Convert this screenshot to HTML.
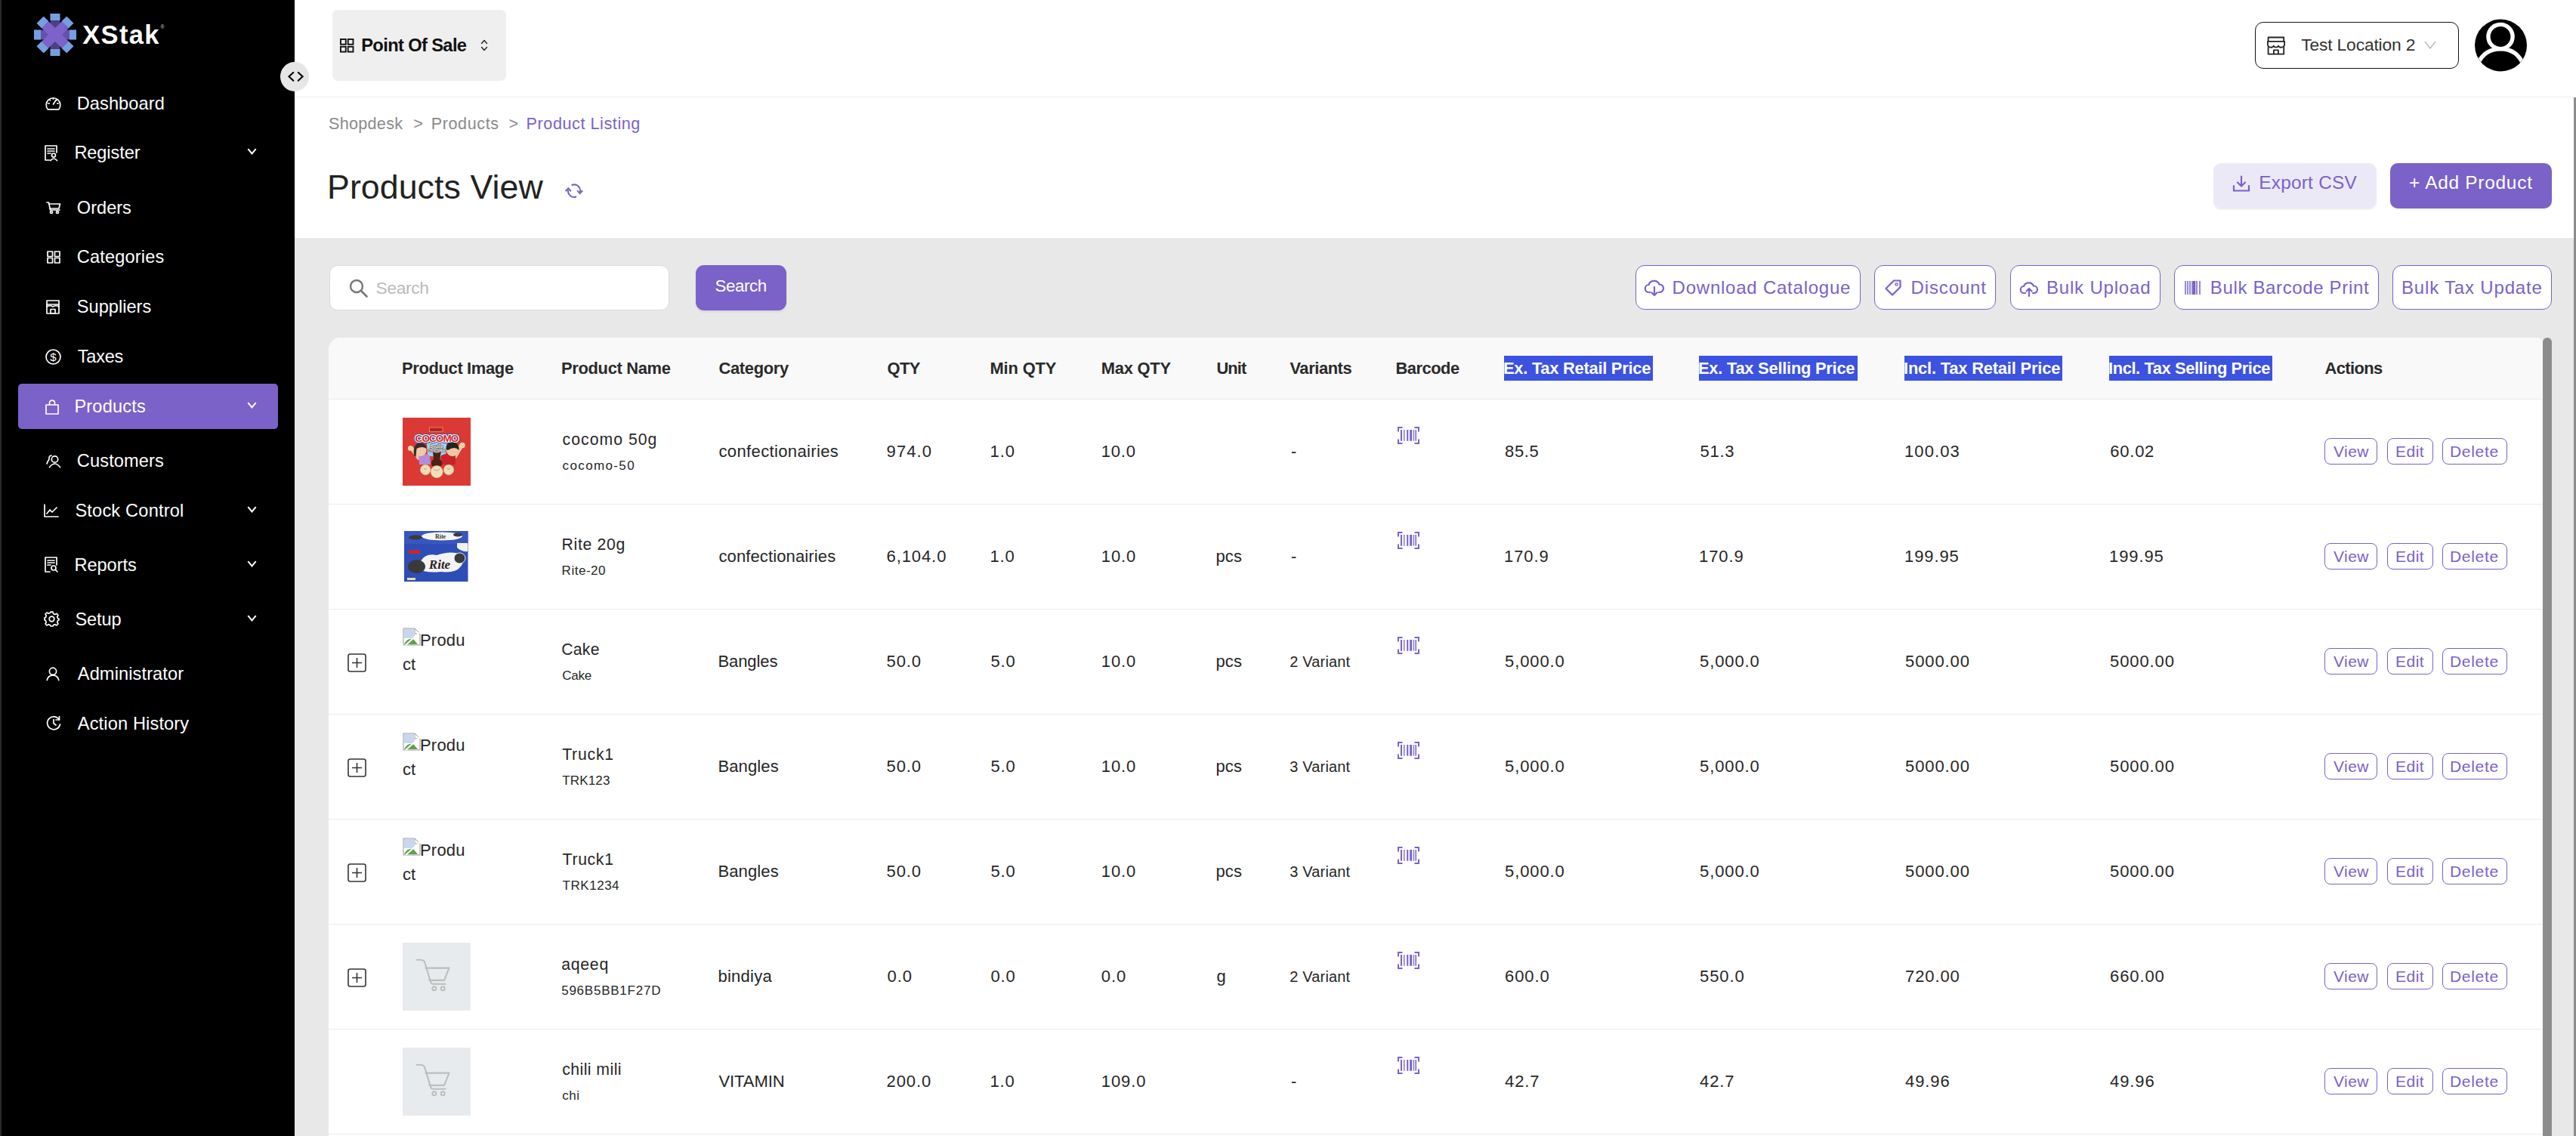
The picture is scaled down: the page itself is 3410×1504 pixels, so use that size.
<!DOCTYPE html>
<html><head><meta charset="utf-8"><title>Products View</title>
<style>
html,body{margin:0;padding:0;}
body{width:3410px;height:1504px;overflow:hidden;position:relative;background:#fff;font-family:"Liberation Sans",sans-serif;}
.a{position:absolute;box-sizing:border-box;}
.t{position:absolute;line-height:1;white-space:nowrap;}
svg.a{overflow:visible;}
</style></head><body>

<div class="a" style="left:390.0px;top:0.0px;width:3020.0px;height:128.0px;background:#fff;"></div>
<div class="a" style="left:390.0px;top:128.0px;width:3020.0px;height:1.0px;background:#EDEDED;"></div>
<div class="a" style="left:390.0px;top:315.0px;width:3020.0px;height:1189.0px;background:#E8E8E8;"></div>
<div class="a" style="left:3407.0px;top:129.0px;width:3.0px;height:1375.0px;background:#8C8C8C;"></div>
<div class="a" style="left:0.0px;top:0.0px;width:390.0px;height:1504.0px;background:#000;"></div>
<div class="a" style="left:0.0px;top:0.0px;width:1.5px;height:1504.0px;background:#2a2a2a;"></div>
<svg class="a" style="left:44.8px;top:18.0px;" width="56" height="56" viewBox="0 0 56 56">
<g transform="translate(28,28)">
 <g><rect x="-6.4" y="-28" width="12.8" height="56" fill="#4E3E82"/><rect x="-6.4" y="-28" width="12.8" height="9" fill="#74A0E0"/><rect x="-6.4" y="19" width="12.8" height="9" fill="#74A0E0"/></g>
 <g transform="rotate(90)"><rect x="-6.4" y="-28" width="12.8" height="56" fill="#6551A8"/><rect x="-6.4" y="-28" width="12.8" height="9" fill="#74A0E0"/><rect x="-6.4" y="19" width="12.8" height="9" fill="#74A0E0"/></g>
 <g transform="rotate(45)"><rect x="-6.4" y="-28" width="12.8" height="56" fill="#7B63C9"/><rect x="-6.4" y="-28" width="12.8" height="9" fill="#74A0E0"/><rect x="-6.4" y="19" width="12.8" height="9" fill="#74A0E0"/></g>
 <g transform="rotate(-45)"><rect x="-6.4" y="-28" width="12.8" height="56" fill="#7B63C9"/><rect x="-6.4" y="-28" width="12.8" height="9" fill="#74A0E0"/><rect x="-6.4" y="19" width="12.8" height="9" fill="#74A0E0"/></g>
</g></svg>
<div class="t" style="left:109.2px;top:28.6px;font-size:34.5px;color:#fff;font-weight:700;letter-spacing:1.350px;">XStak</div>
<div class="t" style="left:212.6px;top:32.1px;font-size:7px;color:#ccc;font-weight:400;letter-spacing:0.000px;">&reg;</div>
<div class="a" style="left:24.0px;top:508.0px;width:344.0px;height:60.0px;background:#7A62C8;border-radius:5px;"></div>
<div class="t" style="left:101.7px;top:125.6px;font-size:23.6px;color:#fff;font-weight:400;letter-spacing:0.088px;">Dashboard</div>
<svg class="a" style="left:60.0px;top:127.0px;" width="21" height="19" viewBox="0 0 21 19"><path d="M3.2 17.8 A9.3 9.3 0 1 1 17.8 17.8 Z" fill="none" stroke="#fff" stroke-width="1.7" stroke-linecap="round" stroke-linejoin="round"/><path d="M10.5 11 L14 5.5" fill="none" stroke="#fff" stroke-width="1.7" stroke-linecap="round" stroke-linejoin="round" stroke-width="2"/><path d="M10.5 3 v1.2 M4 9.8 h1.2 M17 9.8 h-1.2 M5.6 5 l0.8 0.8 M15.4 5 l-0.8 0.8" fill="none" stroke="#fff" stroke-width="1.7" stroke-linecap="round" stroke-linejoin="round"/></svg>
<div class="t" style="left:98.4px;top:191.0px;font-size:23.6px;color:#fff;font-weight:400;letter-spacing:-0.100px;">Register</div>
<svg class="a" style="left:58.8px;top:192.2px;" width="18" height="21" viewBox="0 0 18 21"><path d="M7 20 H1 V1 H16 V10" fill="none" stroke="#fff" stroke-width="1.7" stroke-linecap="round" stroke-linejoin="round"/><path d="M4 5 H13 M4 8 H13 M4 11 H8" fill="none" stroke="#fff" stroke-width="1.7" stroke-linecap="round" stroke-linejoin="round"/><circle cx="12" cy="13.5" r="2.5" fill="none" stroke="#fff" stroke-width="1.7" stroke-linecap="round" stroke-linejoin="round"/><path d="M8 20.5 Q12 15.5 16.5 20.5" fill="none" stroke="#fff" stroke-width="1.7" stroke-linecap="round" stroke-linejoin="round"/></svg>
<svg class="a" style="left:326.0px;top:195.0px;" width="14" height="10" viewBox="0 0 14 10"><path d="M2.3 2.2 L7.5 8.5 L12.7 2.2" fill="none" stroke="#fff" stroke-width="2" stroke-linecap="butt" stroke-linejoin="miter"/></svg>
<div class="t" style="left:101.8px;top:263.8px;font-size:23.6px;color:#fff;font-weight:400;letter-spacing:0.000px;">Orders</div>
<svg class="a" style="left:61.0px;top:267.0px;" width="20" height="16" viewBox="0 0 20 16"><path d="M1 1 H3.5 L5.5 11 H18" fill="none" stroke="#fff" stroke-width="1.7" stroke-linecap="round" stroke-linejoin="round"/><path d="M4 3 H18.5 L17 9 H5.2" fill="none" stroke="#fff" stroke-width="1.7" stroke-linecap="round" stroke-linejoin="round"/><circle cx="7" cy="14" r="1.5" fill="none" stroke="#fff" stroke-width="1.7" stroke-linecap="round" stroke-linejoin="round"/><circle cx="15" cy="14" r="1.5" fill="none" stroke="#fff" stroke-width="1.7" stroke-linecap="round" stroke-linejoin="round"/></svg>
<div class="t" style="left:101.8px;top:329.0px;font-size:23.6px;color:#fff;font-weight:400;letter-spacing:0.144px;">Categories</div>
<svg class="a" style="left:61.8px;top:332.0px;" width="18" height="17" viewBox="0 0 18 17"><rect x="1" y="1" width="6.5" height="6.5" fill="none" stroke="#fff" stroke-width="1.7" stroke-linecap="round" stroke-linejoin="round"/><rect x="10.5" y="1" width="6.5" height="6.5" fill="none" stroke="#fff" stroke-width="1.7" stroke-linecap="round" stroke-linejoin="round"/><rect x="1" y="9.5" width="6.5" height="6.5" fill="none" stroke="#fff" stroke-width="1.7" stroke-linecap="round" stroke-linejoin="round"/><rect x="10.5" y="9.5" width="6.5" height="6.5" fill="none" stroke="#fff" stroke-width="1.7" stroke-linecap="round" stroke-linejoin="round"/></svg>
<div class="t" style="left:101.8px;top:395.0px;font-size:23.6px;color:#fff;font-weight:400;letter-spacing:0.012px;">Suppliers</div>
<svg class="a" style="left:61.4px;top:397.0px;" width="18" height="19" viewBox="0 0 18 19"><rect x="1" y="1" width="16" height="17" fill="none" stroke="#fff" stroke-width="1.7" stroke-linecap="round" stroke-linejoin="round"/><path d="M1 6 H17" fill="none" stroke="#fff" stroke-width="1.7" stroke-linecap="round" stroke-linejoin="round"/><path d="M1 9 Q5 6.5 9 9 Q13 6.5 17 9" fill="none" stroke="#fff" stroke-width="1.7" stroke-linecap="round" stroke-linejoin="round"/><rect x="6" y="12.5" width="6" height="5.5" fill="none" stroke="#fff" stroke-width="1.7" stroke-linecap="round" stroke-linejoin="round"/></svg>
<div class="t" style="left:102.8px;top:461.0px;font-size:23.6px;color:#fff;font-weight:400;letter-spacing:-0.275px;">Taxes</div>
<svg class="a" style="left:60.3px;top:461.6px;" width="21" height="21" viewBox="0 0 21 21"><circle cx="10.5" cy="10.5" r="9.5" fill="none" stroke="#fff" stroke-width="1.7" stroke-linecap="round" stroke-linejoin="round"/><text x="10.5" y="15.8" font-size="15" text-anchor="middle" fill="#fff" font-family="Liberation Sans">$</text></svg>
<div class="t" style="left:98.4px;top:527.0px;font-size:23.6px;color:#fff;font-weight:400;letter-spacing:0.186px;">Products</div>
<svg class="a" style="left:58.5px;top:529.0px;" width="20" height="20" viewBox="0 0 20 20"><path d="M2 7 H18 V19 H2 Z" fill="none" stroke="#fff" stroke-width="1.7" stroke-linecap="round" stroke-linejoin="round"/><path d="M6.5 7 V4.5 Q6.5 1.2 10 1.2 Q13.5 1.2 13.5 4.5 V7" fill="none" stroke="#fff" stroke-width="1.7" stroke-linecap="round" stroke-linejoin="round"/></svg>
<svg class="a" style="left:326.0px;top:531.0px;" width="14" height="10" viewBox="0 0 14 10"><path d="M2.3 2.2 L7.5 8.5 L12.7 2.2" fill="none" stroke="#fff" stroke-width="2" stroke-linecap="butt" stroke-linejoin="miter"/></svg>
<div class="t" style="left:101.8px;top:599.0px;font-size:23.6px;color:#fff;font-weight:400;letter-spacing:0.125px;">Customers</div>
<svg class="a" style="left:60.5px;top:600.0px;" width="20" height="19" viewBox="0 0 20 19"><circle cx="11.5" cy="8" r="4.2" fill="none" stroke="#fff" stroke-width="1.7" stroke-linecap="round" stroke-linejoin="round"/><path d="M4.5 18.5 Q11.5 9.5 18.5 18.5" fill="none" stroke="#fff" stroke-width="1.7" stroke-linecap="round" stroke-linejoin="round"/><path d="M7 3 Q3.5 3.5 4 8 Q2 11 1 14" fill="none" stroke="#fff" stroke-width="1.7" stroke-linecap="round" stroke-linejoin="round"/></svg>
<div class="t" style="left:99.4px;top:664.5px;font-size:23.6px;color:#fff;font-weight:400;letter-spacing:0.192px;">Stock Control</div>
<svg class="a" style="left:58.0px;top:667.0px;" width="20" height="18" viewBox="0 0 20 18"><path d="M1 1 V17 H19" fill="none" stroke="#fff" stroke-width="1.7" stroke-linecap="round" stroke-linejoin="round"/><path d="M4 13 L8 8 L11 11 L17 5" fill="none" stroke="#fff" stroke-width="1.7" stroke-linecap="round" stroke-linejoin="round"/></svg>
<svg class="a" style="left:326.0px;top:668.5px;" width="14" height="10" viewBox="0 0 14 10"><path d="M2.3 2.2 L7.5 8.5 L12.7 2.2" fill="none" stroke="#fff" stroke-width="2" stroke-linecap="butt" stroke-linejoin="miter"/></svg>
<div class="t" style="left:98.4px;top:737.0px;font-size:23.6px;color:#fff;font-weight:400;letter-spacing:-0.033px;">Reports</div>
<svg class="a" style="left:58.5px;top:737.0px;" width="18" height="21" viewBox="0 0 18 21"><path d="M7 20 H1 V1 H16 V11" fill="none" stroke="#fff" stroke-width="1.7" stroke-linecap="round" stroke-linejoin="round"/><path d="M4 5 H13 M4 8 H13 M4 11 H8" fill="none" stroke="#fff" stroke-width="1.7" stroke-linecap="round" stroke-linejoin="round"/><circle cx="12" cy="15" r="3" fill="none" stroke="#fff" stroke-width="1.7" stroke-linecap="round" stroke-linejoin="round"/><path d="M14.5 17.5 L17 20" fill="none" stroke="#fff" stroke-width="1.7" stroke-linecap="round" stroke-linejoin="round"/></svg>
<svg class="a" style="left:326.0px;top:741.0px;" width="14" height="10" viewBox="0 0 14 10"><path d="M2.3 2.2 L7.5 8.5 L12.7 2.2" fill="none" stroke="#fff" stroke-width="2" stroke-linecap="butt" stroke-linejoin="miter"/></svg>
<div class="t" style="left:99.4px;top:809.0px;font-size:23.6px;color:#fff;font-weight:400;letter-spacing:-0.125px;">Setup</div>
<svg class="a" style="left:58.0px;top:809.0px;" width="21" height="21" viewBox="0 0 21 21"><circle cx="10.5" cy="10.5" r="3.3" fill="none" stroke="#fff" stroke-width="1.7" stroke-linecap="round" stroke-linejoin="round"/><path d="M9 1.2 H12 L12.6 3.6 L14.8 4.6 L17 3.4 L19 5.5 L17.7 7.7 L18.6 9.8 L20 10.5 V12 L18.6 12.6 L17.7 14.8 L19 17 L17 19 L14.8 17.7 L12.6 18.6 L12 20 H9 L8.4 18.6 L6.2 17.7 L4 19 L2 17 L3.3 14.8 L2.4 12.6 L1 12 V9 L2.4 8.4 L3.3 6.2 L2 4 L4 2 L6.2 3.3 L8.4 2.4 Z" fill="none" stroke="#fff" stroke-width="1.7" stroke-linecap="round" stroke-linejoin="round"/></svg>
<svg class="a" style="left:326.0px;top:813.0px;" width="14" height="10" viewBox="0 0 14 10"><path d="M2.3 2.2 L7.5 8.5 L12.7 2.2" fill="none" stroke="#fff" stroke-width="2" stroke-linecap="butt" stroke-linejoin="miter"/></svg>
<div class="t" style="left:102.8px;top:881.0px;font-size:23.6px;color:#fff;font-weight:400;letter-spacing:0.108px;">Administrator</div>
<svg class="a" style="left:61.0px;top:883.0px;" width="18" height="18" viewBox="0 0 18 18"><circle cx="9" cy="5.8" r="4.6" fill="none" stroke="#fff" stroke-width="1.7" stroke-linecap="round" stroke-linejoin="round"/><path d="M1.2 17.5 Q2.5 11.2 9 11.2 Q15.5 11.2 16.8 17.5" fill="none" stroke="#fff" stroke-width="1.7" stroke-linecap="round" stroke-linejoin="round"/></svg>
<div class="t" style="left:102.8px;top:947.0px;font-size:23.6px;color:#fff;font-weight:400;letter-spacing:0.138px;">Action History</div>
<svg class="a" style="left:60.5px;top:947.0px;" width="20" height="20" viewBox="0 0 20 20"><path d="M17.5 6 A8.5 8.5 0 1 0 18.5 12" fill="none" stroke="#fff" stroke-width="1.7" stroke-linecap="round" stroke-linejoin="round"/><path d="M17.5 1.5 V6 H13" fill="none" stroke="#fff" stroke-width="1.7" stroke-linecap="round" stroke-linejoin="round"/><path d="M10 5.5 V10.5 L13 13" fill="none" stroke="#fff" stroke-width="1.7" stroke-linecap="round" stroke-linejoin="round"/></svg>
<div class="a" style="left:371.0px;top:82.0px;width:38.0px;height:39.0px;background:#E6E6E6;border-radius:50%;"></div>
<svg class="a" style="left:380.0px;top:93.0px;" width="24" height="18" viewBox="0 0 24 18"><path d="M8.3 3 L2.5 8.3 L8.3 13.8 M14.8 3 L20.6 8.3 L14.8 13.8" fill="none" stroke="#000" stroke-width="2.1" stroke-linecap="round" stroke-linejoin="miter"/></svg>
<div class="a" style="left:440.0px;top:13.0px;width:230.0px;height:94.0px;background:#EFEFEF;border-radius:7px;"></div>
<svg class="a" style="left:449.8px;top:50.9px;" width="20" height="19" viewBox="0 0 20 19"><g fill="none" stroke="#111" stroke-width="1.9"><rect x="0.95" y="0.95" width="6.8" height="6.8"/><rect x="10.7" y="0.95" width="6.8" height="6.8"/><rect x="0.95" y="10.8" width="6.8" height="6.8"/><rect x="10.7" y="10.8" width="6.8" height="6.8"/></g></svg>
<div class="t" style="left:478.2px;top:48.9px;font-size:23.7px;color:#111;font-weight:700;letter-spacing:-0.633px;">Point Of Sale</div>
<svg class="a" style="left:635.5px;top:52.0px;" width="10" height="16" viewBox="0 0 10 16"><path d="M1.5 5.5 L5 1.5 L8.5 5.5 M1.5 10.5 L5 14.5 L8.5 10.5" fill="none" stroke="#222" stroke-width="1.4" stroke-linecap="round" stroke-linejoin="round"/></svg>
<div class="a" style="left:2985.0px;top:29.0px;width:270.0px;height:62.0px;border:1.6px solid #111;border-radius:11px;background:#fff;"></div>
<svg class="a" style="left:2995.0px;top:42.8px;" width="36" height="36" viewBox="0 0 36 36"><g fill="none" stroke="#222" stroke-width="1.8" stroke-linejoin="round"><path d="M7.6 11.9 V6.5 H28.2 V11.9"/><path d="M6.9 11.9 H29.1 V15.8 C29.1 20.6 22 20.8 21 17.6 C19.9 20.4 15.9 20.4 14.8 17.6 C13.8 20.8 6.9 20.6 6.9 15.8 Z"/><path d="M7.6 19.2 V28.7 H28.2 V19.2"/><path d="M14.9 28.7 V23.4 H20.9 V28.7"/></g></svg>
<div class="t" style="left:3046.2px;top:48.3px;font-size:22.8px;color:#333;font-weight:400;letter-spacing:-0.150px;">Test Location 2</div>
<svg class="a" style="left:3208.5px;top:54.0px;" width="16" height="11" viewBox="0 0 16 11"><path d="M1 1 L8 10 L15 1" fill="none" stroke="#bbb" stroke-width="1.5"/></svg>
<svg class="a" style="left:3276.0px;top:26.0px;" width="69" height="69" viewBox="0 0 69 69"><defs><clipPath id="avc"><circle cx="34.5" cy="34" r="34.3"/></clipPath></defs><circle cx="34.5" cy="34" r="34.5" fill="#000"/><g clip-path="url(#avc)" fill="none" stroke="#fff" stroke-width="5.4"><circle cx="34" cy="22.5" r="16.1"/><path d="M3 61 C9 45.5 20 38.8 34 38.8 C48 38.8 59 45.5 65 61"/></g></svg>
<div class="t" style="left:435.0px;top:152.7px;font-size:21.6px;color:#8A8A8A;font-weight:400;letter-spacing:0.286px;">Shopdesk</div>
<div class="t" style="left:547.2px;top:152.7px;font-size:21.6px;color:#8A8A8A;font-weight:400;letter-spacing:0.000px;">&gt;</div>
<div class="t" style="left:570.8px;top:152.7px;font-size:21.6px;color:#8A8A8A;font-weight:400;letter-spacing:0.571px;">Products</div>
<div class="t" style="left:673.6px;top:152.7px;font-size:21.6px;color:#8A8A8A;font-weight:400;letter-spacing:0.000px;">&gt;</div>
<div class="t" style="left:696.6px;top:152.7px;font-size:21.6px;color:#7A62C8;font-weight:400;letter-spacing:0.564px;">Product Listing</div>
<div class="t" style="left:433.0px;top:226.2px;font-size:44.7px;color:#222;font-weight:400;letter-spacing:0.075px;">Products View</div>
<svg class="a" style="left:740.0px;top:235.0px;" width="40" height="35" viewBox="0 0 40 35"><g fill="none" stroke="#7A62C8" stroke-width="2.1" stroke-linecap="butt" stroke-linejoin="miter"><path d="M16.6 10.3 A7.9 7.9 0 0 1 27.7 19.8"/><path d="M24.2 17.4 L27.6 21 L31.2 17.2"/><path d="M23.1 25.3 A7.9 7.9 0 0 1 12.2 16.5"/><path d="M8.6 18.3 L12.3 14.4 L15.8 18.3"/></g></svg>
<div class="a" style="left:2930.0px;top:216.0px;width:216.0px;height:60.0px;background:#ECE9F7;border-radius:10px;box-shadow:0 2px 2px rgba(0,0,0,0.06);"></div>
<svg class="a" style="left:2955.0px;top:232.0px;" width="24" height="22" viewBox="0 0 24 22"><path d="M12 1.5 V14 M7 9.5 L12 14.5 L17 9.5" fill="none" stroke="#7A62C8" stroke-width="2.2" stroke-linecap="round" stroke-linejoin="round"/><path d="M2 14 V20.5 H22 V14" fill="none" stroke="#7A62C8" stroke-width="2.2" stroke-linecap="round"/></svg>
<div class="t" style="left:2990.2px;top:230.1px;font-size:24.4px;color:#7A62C8;font-weight:400;letter-spacing:0.244px;">Export CSV</div>
<div class="a" style="left:3164.0px;top:216.0px;width:214.0px;height:60.0px;background:#7A62C8;border-radius:10px;box-shadow:0 2px 2px rgba(0,0,0,0.06);"></div>
<div class="t" style="left:3189.0px;top:230.1px;font-size:24.4px;color:#fff;font-weight:400;letter-spacing:0.750px;">+ Add Product</div>
<div class="a" style="left:435.5px;top:351.0px;width:450.0px;height:59.5px;background:#fff;border:1.3px solid #DADADA;border-radius:11px;"></div>
<svg class="a" style="left:462.0px;top:369.0px;" width="26" height="25" viewBox="0 0 26 25"><circle cx="10" cy="10" r="8" fill="none" stroke="#777" stroke-width="2.4"/><path d="M16 16 L23.5 23.5" stroke="#777" stroke-width="2.6" stroke-linecap="round"/></svg>
<div class="t" style="left:497.6px;top:369.5px;font-size:22.8px;color:#BBBBBB;font-weight:400;letter-spacing:-0.380px;">Search</div>
<div class="a" style="left:921.0px;top:351.0px;width:120.0px;height:60.0px;background:#7A62C8;border-radius:11px;box-shadow:0 2px 3px rgba(0,0,0,0.08);"></div>
<div class="t" style="left:946.6px;top:367.9px;font-size:22.3px;color:#fff;font-weight:400;letter-spacing:-0.440px;">Search</div>
<div class="a" style="left:2165.0px;top:351.3px;width:297.5px;height:58.9px;background:#fff;border:1.3px solid #7A62C8;border-radius:12px;"></div>
<div class="t" style="left:2213.6px;top:368.9px;font-size:24px;color:#7A62C8;font-weight:400;letter-spacing:0.765px;">Download Catalogue</div>
<svg class="a" style="left:2177.0px;top:370.0px;" width="26" height="22" viewBox="0 0 26 22"><path d="M7.5 17 H6 A5 5 0 0 1 5.5 7 A7.5 7.5 0 0 1 19.5 6.5 A5 5 0 0 1 20 17 H18.5" fill="none" stroke="#7A62C8" stroke-width="2.2" stroke-linecap="round"/><path d="M13 10 V21 M9.5 17.5 L13 21 L16.5 17.5" fill="none" stroke="#7A62C8" stroke-width="2.2" stroke-linecap="round" stroke-linejoin="round"/></svg>
<div class="a" style="left:2481.4px;top:351.3px;width:160.9px;height:58.9px;background:#fff;border:1.3px solid #7A62C8;border-radius:12px;"></div>
<div class="t" style="left:2529.6px;top:368.9px;font-size:24px;color:#7A62C8;font-weight:400;letter-spacing:0.857px;">Discount</div>
<svg class="a" style="left:2495.4px;top:370.0px;" width="22" height="22" viewBox="0 0 22 22"><path d="M12 1.5 H20.5 V10 L10 20.5 L1.5 12 Z" fill="none" stroke="#7A62C8" stroke-width="2.2" stroke-linejoin="round"/><circle cx="15.5" cy="6.5" r="1.6" fill="none" stroke="#7A62C8" stroke-width="1.4"/></svg>
<div class="a" style="left:2661.2px;top:351.3px;width:198.6px;height:58.9px;background:#fff;border:1.3px solid #7A62C8;border-radius:12px;"></div>
<div class="t" style="left:2709.0px;top:368.9px;font-size:24px;color:#7A62C8;font-weight:400;letter-spacing:0.810px;">Bulk Upload</div>
<svg class="a" style="left:2674.2px;top:372.0px;" width="24" height="21" viewBox="0 0 24 21"><path d="M7 16 H5.5 A4.5 4.5 0 0 1 5 7 A7 7 0 0 1 18 6.5 A4.5 4.5 0 0 1 18.5 16 H17" fill="none" stroke="#7A62C8" stroke-width="2.2" stroke-linecap="round"/><path d="M12 20 V10 M8.5 13.5 L12 10 L15.5 13.5" fill="none" stroke="#7A62C8" stroke-width="2.2" stroke-linecap="round" stroke-linejoin="round"/></svg>
<div class="a" style="left:2878.0px;top:351.3px;width:270.7px;height:58.9px;background:#fff;border:1.3px solid #7A62C8;border-radius:12px;"></div>
<div class="t" style="left:2925.8px;top:368.9px;font-size:24px;color:#7A62C8;font-weight:400;letter-spacing:0.647px;">Bulk Barcode Print</div>
<svg class="a" style="left:2892.0px;top:372.0px;" width="22" height="18" viewBox="0 0 22 18"><path d="M1 0 V18 M4 0 V18 M7 0 V18 M10 0 V18 M16 0 V18 M20 0 V18" stroke="#7A62C8" stroke-width="1.5"/><path d="M12.5 0 V18" stroke="#7A62C8" stroke-width="3.5"/></svg>
<div class="a" style="left:3167.0px;top:351.3px;width:211.0px;height:58.9px;background:#fff;border:1.3px solid #7A62C8;border-radius:12px;"></div>
<div class="t" style="left:3179.0px;top:368.9px;font-size:24px;color:#7A62C8;font-weight:400;letter-spacing:0.821px;">Bulk Tax Update</div>
<div class="a" style="left:435.0px;top:447.0px;width:2931.0px;height:1057.0px;background:#fff;border-radius:16px 8px 0 0;overflow:hidden;"></div>
<div class="a" style="left:435.0px;top:447.0px;width:2931.0px;height:81.0px;background:#F9F9F9;border-radius:16px 8px 0 0;"></div>
<div class="a" style="left:435.0px;top:528.0px;width:2931.0px;height:1.0px;background:#EBEBEB;"></div>
<div class="a" style="left:435.0px;top:1501.0px;width:2931.0px;height:1.0px;background:#EBEBEB;"></div>
<div class="a" style="left:3366.0px;top:447.0px;width:12.0px;height:1057.0px;background:#8C8C8C;border-radius:6px 6px 0 0;"></div>
<div class="t" style="left:532.0px;top:476.7px;font-size:21.9px;color:#2a2a2a;font-weight:700;letter-spacing:-0.333px;">Product Image</div>
<div class="t" style="left:743.0px;top:476.7px;font-size:21.9px;color:#2a2a2a;font-weight:700;letter-spacing:-0.318px;">Product Name</div>
<div class="t" style="left:951.4px;top:476.7px;font-size:21.9px;color:#2a2a2a;font-weight:700;letter-spacing:-0.300px;">Category</div>
<div class="t" style="left:1174.6px;top:476.7px;font-size:21.9px;color:#2a2a2a;font-weight:700;letter-spacing:-0.650px;">QTY</div>
<div class="t" style="left:1310.4px;top:476.7px;font-size:21.9px;color:#2a2a2a;font-weight:700;letter-spacing:-0.117px;">Min QTY</div>
<div class="t" style="left:1457.8px;top:476.7px;font-size:21.9px;color:#2a2a2a;font-weight:700;letter-spacing:-0.233px;">Max QTY</div>
<div class="t" style="left:1610.4px;top:476.7px;font-size:21.9px;color:#2a2a2a;font-weight:700;letter-spacing:-0.900px;">Unit</div>
<div class="t" style="left:1707.4px;top:476.7px;font-size:21.9px;color:#2a2a2a;font-weight:700;letter-spacing:-0.414px;">Variants</div>
<div class="t" style="left:1847.4px;top:476.7px;font-size:21.9px;color:#2a2a2a;font-weight:700;letter-spacing:-0.483px;">Barcode</div>
<div class="a" style="left:1991.0px;top:471.0px;width:197.0px;height:33.0px;background:#3C52E0;"></div>
<div class="t" style="left:1990.0px;top:476.7px;font-size:21.9px;color:#fff;font-weight:700;letter-spacing:-0.263px;">Ex. Tax Retail Price</div>
<div class="a" style="left:2249.0px;top:471.0px;width:210.0px;height:33.0px;background:#3C52E0;"></div>
<div class="t" style="left:2248.0px;top:476.7px;font-size:21.9px;color:#fff;font-weight:700;letter-spacing:-0.250px;">Ex. Tax Selling Price</div>
<div class="a" style="left:2521.0px;top:471.0px;width:209.0px;height:33.0px;background:#3C52E0;"></div>
<div class="t" style="left:2520.0px;top:476.7px;font-size:21.9px;color:#fff;font-weight:700;letter-spacing:-0.190px;">Incl. Tax Retail Price</div>
<div class="a" style="left:2792.0px;top:471.0px;width:216.0px;height:33.0px;background:#3C52E0;"></div>
<div class="t" style="left:2791.0px;top:476.7px;font-size:21.9px;color:#fff;font-weight:700;letter-spacing:-0.409px;">Incl. Tax Selling Price</div>
<div class="t" style="left:3077.6px;top:476.7px;font-size:21.9px;color:#2a2a2a;font-weight:700;letter-spacing:-0.633px;">Actions</div>
<div class="t" style="left:951.5px;top:586.7px;font-size:22px;color:#262626;font-weight:400;letter-spacing:0.367px;">confectionairies</div>
<div class="t" style="left:1173.6px;top:586.7px;font-size:22px;color:#262626;font-weight:400;letter-spacing:1.100px;">974.0</div>
<div class="t" style="left:1310.4px;top:586.7px;font-size:22px;color:#262626;font-weight:400;letter-spacing:1.050px;">1.0</div>
<div class="t" style="left:1457.8px;top:586.7px;font-size:22px;color:#262626;font-weight:400;letter-spacing:0.800px;">10.0</div>
<div class="t" style="left:1709.0px;top:586.7px;font-size:22px;color:#262626;font-weight:400;letter-spacing:0.000px;">-</div>
<div class="t" style="left:1992.0px;top:586.7px;font-size:22px;color:#262626;font-weight:400;letter-spacing:0.667px;">85.5</div>
<div class="t" style="left:2250.4px;top:586.7px;font-size:22px;color:#262626;font-weight:400;letter-spacing:0.800px;">51.3</div>
<div class="t" style="left:2521.0px;top:586.7px;font-size:22px;color:#262626;font-weight:400;letter-spacing:1.100px;">100.03</div>
<div class="t" style="left:2793.3px;top:586.7px;font-size:22px;color:#262626;font-weight:400;letter-spacing:0.750px;">60.02</div>
<div class="t" style="left:744.6px;top:571.0px;font-size:21.2px;color:#262626;font-weight:400;letter-spacing:1.033px;">cocomo 50g</div>
<div class="t" style="left:744.6px;top:607.6px;font-size:17px;color:#262626;font-weight:400;letter-spacing:1.363px;">cocomo-50</div>
<svg class="a" style="left:1849.0px;top:564.0px;" width="32" height="25" viewBox="0 0 32 25"><path d="M2 7.5 V2 H7.5 M23.5 2 H29 V7.5 M2 17.5 V23 H7.5 M23.5 23 H29 V17.5" fill="none" stroke="#7A62C8" stroke-width="2"/><path d="M6 5 V19.7 M14.25 5 V19.7" stroke="#7A62C8" stroke-width="2.1"/><path d="M9.75 5 V19.7" stroke="#7A62C8" stroke-width="1.3"/><path d="M18.7 5 V19.7" stroke="#7A62C8" stroke-width="3"/><path d="M22.5 5 V19.7" stroke="#7A62C8" stroke-width="1.2"/><path d="M25.25 5 V19.7" stroke="#7A62C8" stroke-width="1.5"/></svg>
<div class="a" style="left:3077.3px;top:579.9px;width:70.2px;height:35.2px;border:1.3px solid #7A62C8;border-radius:8px;"></div>
<div class="t" style="left:3089.0px;top:587.4px;font-size:21px;color:#7A62C8;font-weight:400;letter-spacing:0.433px;">View</div>
<div class="a" style="left:3160.0px;top:579.9px;width:60.6px;height:35.2px;border:1.3px solid #7A62C8;border-radius:8px;"></div>
<div class="t" style="left:3171.0px;top:587.4px;font-size:21px;color:#7A62C8;font-weight:400;letter-spacing:0.500px;">Edit</div>
<div class="a" style="left:3232.8px;top:579.9px;width:85.9px;height:35.2px;border:1.3px solid #7A62C8;border-radius:8px;"></div>
<div class="t" style="left:3243.0px;top:587.4px;font-size:21px;color:#7A62C8;font-weight:400;letter-spacing:0.700px;">Delete</div>
<svg class="a" style="left:533.0px;top:553.0px;" width="90" height="90" viewBox="0 0 90 90"><rect x="0" y="0" width="90" height="90" fill="#DB3A34"/>
<path d="M32 34 Q45 30 58.5 34 L57 50 Q45 53 33 50 Z" fill="#9FCFEF"/>
<rect x="35.5" y="13" width="17.5" height="5.5" fill="#B5232B" stroke="#E9B889" stroke-width="0.6"/>
<text x="45" y="31.5" font-size="13.5" font-weight="bold" text-anchor="middle" fill="#2D5BB0" stroke="#2D5BB0" stroke-width="4" stroke-linejoin="round" font-family="Liberation Sans" letter-spacing="-0.9">COCOMO</text>
<text x="45" y="31.5" font-size="13.5" font-weight="bold" text-anchor="middle" fill="#fff" stroke="#fff" stroke-width="2.2" stroke-linejoin="round" font-family="Liberation Sans" letter-spacing="-0.9">COCOMO</text>
<text x="45" y="31.5" font-size="13.5" font-weight="bold" text-anchor="middle" fill="#D9282A" font-family="Liberation Sans" letter-spacing="-0.9">COCOMO</text>
<path d="M9 41 L20 56 L27 53 L14 39 Z" fill="#F0C6A2"/>
<path d="M21 50 Q28 46 36 50 L37 62 L22 62 Z" fill="#B68BDA"/>
<circle cx="23.5" cy="43" r="8" fill="#F2C8A6"/>
<path d="M15 50 Q13 33 24 33.5 Q32 34 31.5 41 Q26 37 18.5 41 Q18 46 17.5 52 Z" fill="#3B2B2B"/>
<path d="M81 37 L71 54 L64 51 L76 35 Z" fill="#F0C6A2"/>
<path d="M51 50 Q60 45 70 49 L70 62 L52 62 Z" fill="#C8232A"/>
<circle cx="66" cy="43" r="8" fill="#F2C6A2"/>
<path d="M57.5 42 Q57 32 66 32.5 Q75 33 74.5 43 Q69 37 60 43 Z" fill="#232323"/>
<circle cx="10.5" cy="40.5" r="3.6" fill="#F0D2A6"/>
<circle cx="79" cy="36.5" r="3.8" fill="#F0D2A6"/>
<text x="45" y="40" font-size="5" font-weight="bold" text-anchor="middle" fill="#fff" stroke="#5a3020" stroke-width="0.8" paint-order="stroke" font-family="Liberation Sans">Double</text>
<text x="45" y="44.5" font-size="5" font-weight="bold" text-anchor="middle" fill="#fff" stroke="#5a3020" stroke-width="0.8" paint-order="stroke" font-family="Liberation Sans">chocolate</text>
<path d="M40 45 Q45 48 51 45 L49 55 Q54 58 51 64 L39 64 Q36 58 41 55 Z" fill="#4A2218"/>
<circle cx="30.2" cy="69" r="6.7" fill="#EEDDB5" stroke="#D5BF91" stroke-width="0.6"/>
<circle cx="61" cy="69" r="6.7" fill="#EEDDB5" stroke="#D5BF91" stroke-width="0.6"/>
<circle cx="45.2" cy="71.6" r="8" fill="#F0E0BA" stroke="#D5BF91" stroke-width="0.6"/>
<path d="M41 68 Q45 72 49 68 M28 67 Q30 70 32 67 M59 67 Q61 70 63 67" fill="none" stroke="#8a7a5a" stroke-width="0.6"/></svg>
<div class="a" style="left:435.0px;top:667.0px;width:2931.0px;height:1.0px;background:#EBEBEB;"></div>
<div class="t" style="left:951.4px;top:725.7px;font-size:22px;color:#262626;font-weight:400;letter-spacing:0.125px;">confectionairies</div>
<div class="t" style="left:1173.6px;top:725.7px;font-size:22px;color:#262626;font-weight:400;letter-spacing:0.895px;">6,104.0</div>
<div class="t" style="left:1310.4px;top:725.7px;font-size:22px;color:#262626;font-weight:400;letter-spacing:0.895px;">1.0</div>
<div class="t" style="left:1457.8px;top:725.7px;font-size:22px;color:#262626;font-weight:400;letter-spacing:0.895px;">10.0</div>
<div class="t" style="left:1609.4px;top:725.7px;font-size:22px;color:#262626;font-weight:400;letter-spacing:0.125px;">pcs</div>
<div class="t" style="left:1709.0px;top:725.7px;font-size:22px;color:#262626;font-weight:400;letter-spacing:0.000px;">-</div>
<div class="t" style="left:1991.0px;top:725.7px;font-size:22px;color:#262626;font-weight:400;letter-spacing:0.895px;">170.9</div>
<div class="t" style="left:2249.0px;top:725.7px;font-size:22px;color:#262626;font-weight:400;letter-spacing:0.895px;">170.9</div>
<div class="t" style="left:2521.0px;top:725.7px;font-size:22px;color:#262626;font-weight:400;letter-spacing:0.895px;">199.95</div>
<div class="t" style="left:2792.0px;top:725.7px;font-size:22px;color:#262626;font-weight:400;letter-spacing:0.895px;">199.95</div>
<div class="t" style="left:743.6px;top:710.0px;font-size:21.2px;color:#262626;font-weight:400;letter-spacing:0.671px;">Rite 20g</div>
<div class="t" style="left:743.6px;top:746.6px;font-size:17px;color:#262626;font-weight:400;letter-spacing:0.527px;">Rite-20</div>
<svg class="a" style="left:1849.0px;top:703.0px;" width="32" height="25" viewBox="0 0 32 25"><path d="M2 7.5 V2 H7.5 M23.5 2 H29 V7.5 M2 17.5 V23 H7.5 M23.5 23 H29 V17.5" fill="none" stroke="#7A62C8" stroke-width="2"/><path d="M6 5 V19.7 M14.25 5 V19.7" stroke="#7A62C8" stroke-width="2.1"/><path d="M9.75 5 V19.7" stroke="#7A62C8" stroke-width="1.3"/><path d="M18.7 5 V19.7" stroke="#7A62C8" stroke-width="3"/><path d="M22.5 5 V19.7" stroke="#7A62C8" stroke-width="1.2"/><path d="M25.25 5 V19.7" stroke="#7A62C8" stroke-width="1.5"/></svg>
<div class="a" style="left:3077.3px;top:718.9px;width:70.2px;height:35.2px;border:1.3px solid #7A62C8;border-radius:8px;"></div>
<div class="t" style="left:3089.0px;top:726.4px;font-size:21px;color:#7A62C8;font-weight:400;letter-spacing:0.433px;">View</div>
<div class="a" style="left:3160.0px;top:718.9px;width:60.6px;height:35.2px;border:1.3px solid #7A62C8;border-radius:8px;"></div>
<div class="t" style="left:3171.0px;top:726.4px;font-size:21px;color:#7A62C8;font-weight:400;letter-spacing:0.500px;">Edit</div>
<div class="a" style="left:3232.8px;top:718.9px;width:85.9px;height:35.2px;border:1.3px solid #7A62C8;border-radius:8px;"></div>
<div class="t" style="left:3243.0px;top:726.4px;font-size:21px;color:#7A62C8;font-weight:400;letter-spacing:0.700px;">Delete</div>
<svg class="a" style="left:533.0px;top:692.0px;" width="90" height="90" viewBox="0 0 90 90"><g transform="translate(0,-5)"><rect x="0" y="5" width="90" height="90" fill="#fff"/>
<rect x="2" y="16" width="84.5" height="67" fill="#2F4DB6"/>
<rect x="2" y="16" width="84.5" height="17" fill="#3856C0"/>
<ellipse cx="52" cy="23" rx="27" ry="5.5" fill="#F4F4F4"/>
<ellipse cx="17" cy="24.5" rx="9" ry="3" fill="#3A3A3A"/>
<ellipse cx="73" cy="21" rx="6" ry="2.5" fill="#3A3A3A"/>
<text x="50" y="26" font-size="8" font-weight="bold" text-anchor="middle" fill="#333" font-family="Liberation Serif">Rite</text>
<path d="M24 56 Q30 45 45 48 Q62 42 76 46 Q84 55 76 64 Q70 72 50 70 Q30 72 22 66 Q18 60 24 56 Z" fill="#F3F3F3"/>
<text x="49" y="66" font-size="17" font-weight="bold" font-style="italic" text-anchor="middle" fill="#2A2222" font-family="Liberation Serif">Rite</text>
<ellipse cx="18.5" cy="63" rx="11.5" ry="9" fill="#3A3A3A"/>
<ellipse cx="75.5" cy="52" rx="7.5" ry="7" fill="#3A3A3A" stroke="#eee" stroke-width="1"/>
<rect x="8" y="41" width="15" height="5" fill="#C42A2A"/>
<path d="M72 32 H86 V43 Q78 44 72 38 Z" fill="#F2F2F2"/>
<rect x="6" y="78" width="11" height="3" fill="#E6DFA0"/></g></svg>
<div class="a" style="left:435.0px;top:806.0px;width:2931.0px;height:1.0px;background:#EBEBEB;"></div>
<div class="t" style="left:950.4px;top:864.7px;font-size:22px;color:#262626;font-weight:400;letter-spacing:-0.083px;">Bangles</div>
<div class="t" style="left:1173.6px;top:864.7px;font-size:22px;color:#262626;font-weight:400;letter-spacing:0.895px;">50.0</div>
<div class="t" style="left:1311.4px;top:864.7px;font-size:22px;color:#262626;font-weight:400;letter-spacing:0.895px;">5.0</div>
<div class="t" style="left:1457.8px;top:864.7px;font-size:22px;color:#262626;font-weight:400;letter-spacing:0.895px;">10.0</div>
<div class="t" style="left:1609.4px;top:864.7px;font-size:22px;color:#262626;font-weight:400;letter-spacing:0.125px;">pcs</div>
<div class="t" style="left:1707.2px;top:865.9px;font-size:20px;color:#262626;font-weight:400;letter-spacing:0.175px;">2 Variant</div>
<div class="t" style="left:1992.0px;top:864.7px;font-size:22px;color:#262626;font-weight:400;letter-spacing:0.895px;">5,000.0</div>
<div class="t" style="left:2250.0px;top:864.7px;font-size:22px;color:#262626;font-weight:400;letter-spacing:0.895px;">5,000.0</div>
<div class="t" style="left:2522.0px;top:864.7px;font-size:22px;color:#262626;font-weight:400;letter-spacing:0.895px;">5000.00</div>
<div class="t" style="left:2793.0px;top:864.7px;font-size:22px;color:#262626;font-weight:400;letter-spacing:0.895px;">5000.00</div>
<div class="t" style="left:743.2px;top:849.0px;font-size:21.2px;color:#262626;font-weight:400;letter-spacing:0.300px;">Cake</div>
<div class="t" style="left:744.2px;top:885.6px;font-size:17px;color:#262626;font-weight:400;letter-spacing:-0.200px;">Cake</div>
<svg class="a" style="left:1849.0px;top:842.0px;" width="32" height="25" viewBox="0 0 32 25"><path d="M2 7.5 V2 H7.5 M23.5 2 H29 V7.5 M2 17.5 V23 H7.5 M23.5 23 H29 V17.5" fill="none" stroke="#7A62C8" stroke-width="2"/><path d="M6 5 V19.7 M14.25 5 V19.7" stroke="#7A62C8" stroke-width="2.1"/><path d="M9.75 5 V19.7" stroke="#7A62C8" stroke-width="1.3"/><path d="M18.7 5 V19.7" stroke="#7A62C8" stroke-width="3"/><path d="M22.5 5 V19.7" stroke="#7A62C8" stroke-width="1.2"/><path d="M25.25 5 V19.7" stroke="#7A62C8" stroke-width="1.5"/></svg>
<div class="a" style="left:3077.3px;top:857.9px;width:70.2px;height:35.2px;border:1.3px solid #7A62C8;border-radius:8px;"></div>
<div class="t" style="left:3089.0px;top:865.4px;font-size:21px;color:#7A62C8;font-weight:400;letter-spacing:0.433px;">View</div>
<div class="a" style="left:3160.0px;top:857.9px;width:60.6px;height:35.2px;border:1.3px solid #7A62C8;border-radius:8px;"></div>
<div class="t" style="left:3171.0px;top:865.4px;font-size:21px;color:#7A62C8;font-weight:400;letter-spacing:0.500px;">Edit</div>
<div class="a" style="left:3232.8px;top:857.9px;width:85.9px;height:35.2px;border:1.3px solid #7A62C8;border-radius:8px;"></div>
<div class="t" style="left:3243.0px;top:865.4px;font-size:21px;color:#7A62C8;font-weight:400;letter-spacing:0.700px;">Delete</div>
<svg class="a" style="left:459.5px;top:864.5px;" width="25" height="25" viewBox="0 0 25 25"><rect x="1" y="1" width="23" height="23" rx="2.5" fill="none" stroke="#333" stroke-width="1.6"/><path d="M12.5 6 V19 M6 12.5 H19" stroke="#333" stroke-width="1.6"/></svg>
<svg class="a" style="left:533.0px;top:831.0px;" width="24" height="24" viewBox="0 0 24 24"><path d="M1 1 H16 L23 8 V23 H1 Z" fill="#fff" stroke="#999" stroke-width="1"/><path d="M16 1 V8 H23" fill="none" stroke="#999" stroke-width="1"/><rect x="2" y="2" width="14" height="12" fill="#C9D7EE"/><path d="M2 22 Q6 13 14 15 L20 22 Z" fill="#5FA04E"/><path d="M4 23 L23 6" stroke="#fff" stroke-width="2"/></svg>
<div class="t" style="left:556.0px;top:836.6px;font-size:22px;color:#262626;font-weight:400;letter-spacing:0.200px;">Produ</div>
<div class="t" style="left:533.0px;top:868.9px;font-size:22px;color:#262626;font-weight:400;letter-spacing:0.000px;">ct</div>
<div class="a" style="left:435.0px;top:945.0px;width:2931.0px;height:1.0px;background:#EBEBEB;"></div>
<div class="t" style="left:950.4px;top:1003.7px;font-size:22px;color:#262626;font-weight:400;letter-spacing:0.125px;">Bangles</div>
<div class="t" style="left:1173.6px;top:1003.7px;font-size:22px;color:#262626;font-weight:400;letter-spacing:0.895px;">50.0</div>
<div class="t" style="left:1311.4px;top:1003.7px;font-size:22px;color:#262626;font-weight:400;letter-spacing:0.895px;">5.0</div>
<div class="t" style="left:1457.8px;top:1003.7px;font-size:22px;color:#262626;font-weight:400;letter-spacing:0.895px;">10.0</div>
<div class="t" style="left:1609.4px;top:1003.7px;font-size:22px;color:#262626;font-weight:400;letter-spacing:0.125px;">pcs</div>
<div class="t" style="left:1707.2px;top:1004.9px;font-size:20px;color:#262626;font-weight:400;letter-spacing:0.175px;">3 Variant</div>
<div class="t" style="left:1992.0px;top:1003.7px;font-size:22px;color:#262626;font-weight:400;letter-spacing:0.895px;">5,000.0</div>
<div class="t" style="left:2250.0px;top:1003.7px;font-size:22px;color:#262626;font-weight:400;letter-spacing:0.895px;">5,000.0</div>
<div class="t" style="left:2522.0px;top:1003.7px;font-size:22px;color:#262626;font-weight:400;letter-spacing:0.895px;">5000.00</div>
<div class="t" style="left:2793.0px;top:1003.7px;font-size:22px;color:#262626;font-weight:400;letter-spacing:0.895px;">5000.00</div>
<div class="t" style="left:744.2px;top:988.0px;font-size:21.2px;color:#262626;font-weight:400;letter-spacing:0.780px;">Truck1</div>
<div class="t" style="left:744.2px;top:1024.6px;font-size:17px;color:#262626;font-weight:400;letter-spacing:0.160px;">TRK123</div>
<svg class="a" style="left:1849.0px;top:981.0px;" width="32" height="25" viewBox="0 0 32 25"><path d="M2 7.5 V2 H7.5 M23.5 2 H29 V7.5 M2 17.5 V23 H7.5 M23.5 23 H29 V17.5" fill="none" stroke="#7A62C8" stroke-width="2"/><path d="M6 5 V19.7 M14.25 5 V19.7" stroke="#7A62C8" stroke-width="2.1"/><path d="M9.75 5 V19.7" stroke="#7A62C8" stroke-width="1.3"/><path d="M18.7 5 V19.7" stroke="#7A62C8" stroke-width="3"/><path d="M22.5 5 V19.7" stroke="#7A62C8" stroke-width="1.2"/><path d="M25.25 5 V19.7" stroke="#7A62C8" stroke-width="1.5"/></svg>
<div class="a" style="left:3077.3px;top:996.9px;width:70.2px;height:35.2px;border:1.3px solid #7A62C8;border-radius:8px;"></div>
<div class="t" style="left:3089.0px;top:1004.4px;font-size:21px;color:#7A62C8;font-weight:400;letter-spacing:0.433px;">View</div>
<div class="a" style="left:3160.0px;top:996.9px;width:60.6px;height:35.2px;border:1.3px solid #7A62C8;border-radius:8px;"></div>
<div class="t" style="left:3171.0px;top:1004.4px;font-size:21px;color:#7A62C8;font-weight:400;letter-spacing:0.500px;">Edit</div>
<div class="a" style="left:3232.8px;top:996.9px;width:85.9px;height:35.2px;border:1.3px solid #7A62C8;border-radius:8px;"></div>
<div class="t" style="left:3243.0px;top:1004.4px;font-size:21px;color:#7A62C8;font-weight:400;letter-spacing:0.700px;">Delete</div>
<svg class="a" style="left:459.5px;top:1003.5px;" width="25" height="25" viewBox="0 0 25 25"><rect x="1" y="1" width="23" height="23" rx="2.5" fill="none" stroke="#333" stroke-width="1.6"/><path d="M12.5 6 V19 M6 12.5 H19" stroke="#333" stroke-width="1.6"/></svg>
<svg class="a" style="left:533.0px;top:970.0px;" width="24" height="24" viewBox="0 0 24 24"><path d="M1 1 H16 L23 8 V23 H1 Z" fill="#fff" stroke="#999" stroke-width="1"/><path d="M16 1 V8 H23" fill="none" stroke="#999" stroke-width="1"/><rect x="2" y="2" width="14" height="12" fill="#C9D7EE"/><path d="M2 22 Q6 13 14 15 L20 22 Z" fill="#5FA04E"/><path d="M4 23 L23 6" stroke="#fff" stroke-width="2"/></svg>
<div class="t" style="left:556.0px;top:975.6px;font-size:22px;color:#262626;font-weight:400;letter-spacing:0.200px;">Produ</div>
<div class="t" style="left:533.0px;top:1007.9px;font-size:22px;color:#262626;font-weight:400;letter-spacing:0.000px;">ct</div>
<div class="a" style="left:435.0px;top:1084.0px;width:2931.0px;height:1.0px;background:#EBEBEB;"></div>
<div class="t" style="left:950.4px;top:1142.7px;font-size:22px;color:#262626;font-weight:400;letter-spacing:0.125px;">Bangles</div>
<div class="t" style="left:1173.6px;top:1142.7px;font-size:22px;color:#262626;font-weight:400;letter-spacing:0.895px;">50.0</div>
<div class="t" style="left:1311.4px;top:1142.7px;font-size:22px;color:#262626;font-weight:400;letter-spacing:0.895px;">5.0</div>
<div class="t" style="left:1457.8px;top:1142.7px;font-size:22px;color:#262626;font-weight:400;letter-spacing:0.895px;">10.0</div>
<div class="t" style="left:1609.4px;top:1142.7px;font-size:22px;color:#262626;font-weight:400;letter-spacing:0.125px;">pcs</div>
<div class="t" style="left:1707.2px;top:1143.9px;font-size:20px;color:#262626;font-weight:400;letter-spacing:0.175px;">3 Variant</div>
<div class="t" style="left:1992.0px;top:1142.7px;font-size:22px;color:#262626;font-weight:400;letter-spacing:0.895px;">5,000.0</div>
<div class="t" style="left:2250.0px;top:1142.7px;font-size:22px;color:#262626;font-weight:400;letter-spacing:0.895px;">5,000.0</div>
<div class="t" style="left:2522.0px;top:1142.7px;font-size:22px;color:#262626;font-weight:400;letter-spacing:0.895px;">5000.00</div>
<div class="t" style="left:2793.0px;top:1142.7px;font-size:22px;color:#262626;font-weight:400;letter-spacing:0.895px;">5000.00</div>
<div class="t" style="left:744.6px;top:1127.0px;font-size:21.2px;color:#262626;font-weight:400;letter-spacing:0.671px;">Truck1</div>
<div class="t" style="left:744.6px;top:1163.6px;font-size:17px;color:#262626;font-weight:400;letter-spacing:0.527px;">TRK1234</div>
<svg class="a" style="left:1849.0px;top:1120.0px;" width="32" height="25" viewBox="0 0 32 25"><path d="M2 7.5 V2 H7.5 M23.5 2 H29 V7.5 M2 17.5 V23 H7.5 M23.5 23 H29 V17.5" fill="none" stroke="#7A62C8" stroke-width="2"/><path d="M6 5 V19.7 M14.25 5 V19.7" stroke="#7A62C8" stroke-width="2.1"/><path d="M9.75 5 V19.7" stroke="#7A62C8" stroke-width="1.3"/><path d="M18.7 5 V19.7" stroke="#7A62C8" stroke-width="3"/><path d="M22.5 5 V19.7" stroke="#7A62C8" stroke-width="1.2"/><path d="M25.25 5 V19.7" stroke="#7A62C8" stroke-width="1.5"/></svg>
<div class="a" style="left:3077.3px;top:1135.9px;width:70.2px;height:35.2px;border:1.3px solid #7A62C8;border-radius:8px;"></div>
<div class="t" style="left:3089.0px;top:1143.4px;font-size:21px;color:#7A62C8;font-weight:400;letter-spacing:0.433px;">View</div>
<div class="a" style="left:3160.0px;top:1135.9px;width:60.6px;height:35.2px;border:1.3px solid #7A62C8;border-radius:8px;"></div>
<div class="t" style="left:3171.0px;top:1143.4px;font-size:21px;color:#7A62C8;font-weight:400;letter-spacing:0.500px;">Edit</div>
<div class="a" style="left:3232.8px;top:1135.9px;width:85.9px;height:35.2px;border:1.3px solid #7A62C8;border-radius:8px;"></div>
<div class="t" style="left:3243.0px;top:1143.4px;font-size:21px;color:#7A62C8;font-weight:400;letter-spacing:0.700px;">Delete</div>
<svg class="a" style="left:459.5px;top:1142.5px;" width="25" height="25" viewBox="0 0 25 25"><rect x="1" y="1" width="23" height="23" rx="2.5" fill="none" stroke="#333" stroke-width="1.6"/><path d="M12.5 6 V19 M6 12.5 H19" stroke="#333" stroke-width="1.6"/></svg>
<svg class="a" style="left:533.0px;top:1109.0px;" width="24" height="24" viewBox="0 0 24 24"><path d="M1 1 H16 L23 8 V23 H1 Z" fill="#fff" stroke="#999" stroke-width="1"/><path d="M16 1 V8 H23" fill="none" stroke="#999" stroke-width="1"/><rect x="2" y="2" width="14" height="12" fill="#C9D7EE"/><path d="M2 22 Q6 13 14 15 L20 22 Z" fill="#5FA04E"/><path d="M4 23 L23 6" stroke="#fff" stroke-width="2"/></svg>
<div class="t" style="left:556.0px;top:1114.6px;font-size:22px;color:#262626;font-weight:400;letter-spacing:0.200px;">Produ</div>
<div class="t" style="left:533.0px;top:1146.9px;font-size:22px;color:#262626;font-weight:400;letter-spacing:0.000px;">ct</div>
<div class="a" style="left:435.0px;top:1223.0px;width:2931.0px;height:1.0px;background:#EBEBEB;"></div>
<div class="t" style="left:950.4px;top:1281.7px;font-size:22px;color:#262626;font-weight:400;letter-spacing:0.283px;">bindiya</div>
<div class="t" style="left:1174.6px;top:1281.7px;font-size:22px;color:#262626;font-weight:400;letter-spacing:0.895px;">0.0</div>
<div class="t" style="left:1311.4px;top:1281.7px;font-size:22px;color:#262626;font-weight:400;letter-spacing:0.895px;">0.0</div>
<div class="t" style="left:1457.8px;top:1281.7px;font-size:22px;color:#262626;font-weight:400;letter-spacing:0.895px;">0.0</div>
<div class="t" style="left:1610.4px;top:1281.7px;font-size:22px;color:#262626;font-weight:400;letter-spacing:0.125px;">g</div>
<div class="t" style="left:1707.2px;top:1282.9px;font-size:20px;color:#262626;font-weight:400;letter-spacing:0.175px;">2 Variant</div>
<div class="t" style="left:1992.0px;top:1281.7px;font-size:22px;color:#262626;font-weight:400;letter-spacing:0.895px;">600.0</div>
<div class="t" style="left:2250.0px;top:1281.7px;font-size:22px;color:#262626;font-weight:400;letter-spacing:0.895px;">550.0</div>
<div class="t" style="left:2522.0px;top:1281.7px;font-size:22px;color:#262626;font-weight:400;letter-spacing:0.895px;">720.00</div>
<div class="t" style="left:2793.0px;top:1281.7px;font-size:22px;color:#262626;font-weight:400;letter-spacing:0.895px;">660.00</div>
<div class="t" style="left:743.2px;top:1266.0px;font-size:21.2px;color:#262626;font-weight:400;letter-spacing:0.775px;">aqeeq</div>
<div class="t" style="left:743.2px;top:1302.6px;font-size:17px;color:#262626;font-weight:400;letter-spacing:0.764px;">596B5BB1F27D</div>
<svg class="a" style="left:1849.0px;top:1259.0px;" width="32" height="25" viewBox="0 0 32 25"><path d="M2 7.5 V2 H7.5 M23.5 2 H29 V7.5 M2 17.5 V23 H7.5 M23.5 23 H29 V17.5" fill="none" stroke="#7A62C8" stroke-width="2"/><path d="M6 5 V19.7 M14.25 5 V19.7" stroke="#7A62C8" stroke-width="2.1"/><path d="M9.75 5 V19.7" stroke="#7A62C8" stroke-width="1.3"/><path d="M18.7 5 V19.7" stroke="#7A62C8" stroke-width="3"/><path d="M22.5 5 V19.7" stroke="#7A62C8" stroke-width="1.2"/><path d="M25.25 5 V19.7" stroke="#7A62C8" stroke-width="1.5"/></svg>
<div class="a" style="left:3077.3px;top:1274.9px;width:70.2px;height:35.2px;border:1.3px solid #7A62C8;border-radius:8px;"></div>
<div class="t" style="left:3089.0px;top:1282.4px;font-size:21px;color:#7A62C8;font-weight:400;letter-spacing:0.433px;">View</div>
<div class="a" style="left:3160.0px;top:1274.9px;width:60.6px;height:35.2px;border:1.3px solid #7A62C8;border-radius:8px;"></div>
<div class="t" style="left:3171.0px;top:1282.4px;font-size:21px;color:#7A62C8;font-weight:400;letter-spacing:0.500px;">Edit</div>
<div class="a" style="left:3232.8px;top:1274.9px;width:85.9px;height:35.2px;border:1.3px solid #7A62C8;border-radius:8px;"></div>
<div class="t" style="left:3243.0px;top:1282.4px;font-size:21px;color:#7A62C8;font-weight:400;letter-spacing:0.700px;">Delete</div>
<svg class="a" style="left:459.5px;top:1281.5px;" width="25" height="25" viewBox="0 0 25 25"><rect x="1" y="1" width="23" height="23" rx="2.5" fill="none" stroke="#333" stroke-width="1.6"/><path d="M12.5 6 V19 M6 12.5 H19" stroke="#333" stroke-width="1.6"/></svg>
<div class="a" style="left:533.0px;top:1248.0px;width:90.0px;height:90.0px;background:#E8EBEE;"></div>
<svg class="a" style="left:533.0px;top:1248.0px;" width="90" height="90" viewBox="0 0 90 90"><path d="M18.5 22.8 H23 Q28.5 22.8 29.5 27 L37 52 Q37.8 54.8 40.5 54.8 H56.5" fill="none" stroke="#BDBDBD" stroke-width="2.1" stroke-linecap="round"/><path d="M29.5 33.6 H61.5 L55 49.9 H34.5" fill="none" stroke="#BDBDBD" stroke-width="2.1" stroke-linejoin="round"/><circle cx="41.8" cy="60.8" r="2.5" fill="none" stroke="#BDBDBD" stroke-width="2"/><circle cx="53.2" cy="60.8" r="2.5" fill="none" stroke="#BDBDBD" stroke-width="2"/></svg>
<div class="a" style="left:435.0px;top:1362.0px;width:2931.0px;height:1.0px;background:#EBEBEB;"></div>
<div class="t" style="left:951.4px;top:1420.7px;font-size:22px;color:#262626;font-weight:400;letter-spacing:-0.067px;">VITAMIN</div>
<div class="t" style="left:1173.6px;top:1420.7px;font-size:22px;color:#262626;font-weight:400;letter-spacing:0.895px;">200.0</div>
<div class="t" style="left:1310.4px;top:1420.7px;font-size:22px;color:#262626;font-weight:400;letter-spacing:0.895px;">1.0</div>
<div class="t" style="left:1457.8px;top:1420.7px;font-size:22px;color:#262626;font-weight:400;letter-spacing:0.895px;">109.0</div>
<div class="t" style="left:1709.0px;top:1420.7px;font-size:22px;color:#262626;font-weight:400;letter-spacing:0.000px;">-</div>
<div class="t" style="left:1992.0px;top:1420.7px;font-size:22px;color:#262626;font-weight:400;letter-spacing:0.895px;">42.7</div>
<div class="t" style="left:2250.0px;top:1420.7px;font-size:22px;color:#262626;font-weight:400;letter-spacing:0.895px;">42.7</div>
<div class="t" style="left:2522.0px;top:1420.7px;font-size:22px;color:#262626;font-weight:400;letter-spacing:0.895px;">49.96</div>
<div class="t" style="left:2793.0px;top:1420.7px;font-size:22px;color:#262626;font-weight:400;letter-spacing:0.895px;">49.96</div>
<div class="t" style="left:744.2px;top:1405.0px;font-size:21.2px;color:#262626;font-weight:400;letter-spacing:0.467px;">chili mili</div>
<div class="t" style="left:744.2px;top:1441.6px;font-size:17px;color:#262626;font-weight:400;letter-spacing:0.550px;">chi</div>
<svg class="a" style="left:1849.0px;top:1398.0px;" width="32" height="25" viewBox="0 0 32 25"><path d="M2 7.5 V2 H7.5 M23.5 2 H29 V7.5 M2 17.5 V23 H7.5 M23.5 23 H29 V17.5" fill="none" stroke="#7A62C8" stroke-width="2"/><path d="M6 5 V19.7 M14.25 5 V19.7" stroke="#7A62C8" stroke-width="2.1"/><path d="M9.75 5 V19.7" stroke="#7A62C8" stroke-width="1.3"/><path d="M18.7 5 V19.7" stroke="#7A62C8" stroke-width="3"/><path d="M22.5 5 V19.7" stroke="#7A62C8" stroke-width="1.2"/><path d="M25.25 5 V19.7" stroke="#7A62C8" stroke-width="1.5"/></svg>
<div class="a" style="left:3077.3px;top:1413.9px;width:70.2px;height:35.2px;border:1.3px solid #7A62C8;border-radius:8px;"></div>
<div class="t" style="left:3089.0px;top:1421.4px;font-size:21px;color:#7A62C8;font-weight:400;letter-spacing:0.433px;">View</div>
<div class="a" style="left:3160.0px;top:1413.9px;width:60.6px;height:35.2px;border:1.3px solid #7A62C8;border-radius:8px;"></div>
<div class="t" style="left:3171.0px;top:1421.4px;font-size:21px;color:#7A62C8;font-weight:400;letter-spacing:0.500px;">Edit</div>
<div class="a" style="left:3232.8px;top:1413.9px;width:85.9px;height:35.2px;border:1.3px solid #7A62C8;border-radius:8px;"></div>
<div class="t" style="left:3243.0px;top:1421.4px;font-size:21px;color:#7A62C8;font-weight:400;letter-spacing:0.700px;">Delete</div>
<div class="a" style="left:533.0px;top:1387.0px;width:90.0px;height:90.0px;background:#E8EBEE;"></div>
<svg class="a" style="left:533.0px;top:1387.0px;" width="90" height="90" viewBox="0 0 90 90"><path d="M18.5 22.8 H23 Q28.5 22.8 29.5 27 L37 52 Q37.8 54.8 40.5 54.8 H56.5" fill="none" stroke="#BDBDBD" stroke-width="2.1" stroke-linecap="round"/><path d="M29.5 33.6 H61.5 L55 49.9 H34.5" fill="none" stroke="#BDBDBD" stroke-width="2.1" stroke-linejoin="round"/><circle cx="41.8" cy="60.8" r="2.5" fill="none" stroke="#BDBDBD" stroke-width="2"/><circle cx="53.2" cy="60.8" r="2.5" fill="none" stroke="#BDBDBD" stroke-width="2"/></svg>
</body></html>
